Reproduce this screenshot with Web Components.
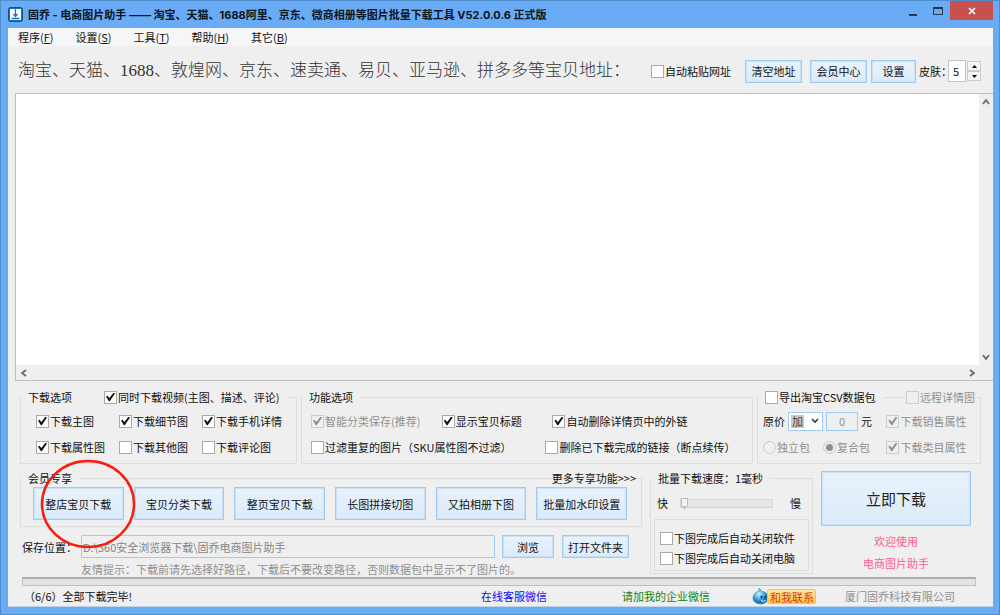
<!DOCTYPE html>
<html lang="zh-CN">
<head>
<meta charset="utf-8">
<meta name="viewport" content="width=device-width, initial-scale=1">
<title>固乔 - 电商图片助手</title>
<style>
  html, body { margin: 0; }
  body {
    font: 11px/16px "Noto Sans CJK SC", sans-serif;
    color: #111;
    --face: #efefef;
    --edge: #a0caf2;
    --line: #dedede;
    --muted: #8f8f8f;
  }
</style>
</head>
<body>
<app-window></app-window>

<script>
function define(name, html, setup) {
  const tpl = document.createElement('template');
  tpl.innerHTML = '<style>*{box-sizing:border-box}button,input,select,textarea{font:inherit;color:inherit;margin:0}</style>' + html;
  customElements.define(name, class extends HTMLElement {
    constructor() {
      super();
      this.attachShadow({ mode: 'open' }).append(tpl.content.cloneNode(true));
    }
    connectedCallback() { if (setup) setup(this, this.shadowRoot); }
  });
}

/* Check box or radio with its caption */
define('opt-check', `
<style>
  :host { display: inline-block; }
  label { display: flex; align-items: center; gap: 1px; white-space: nowrap; }
  input { appearance: none; flex: none; display: grid; place-items: center; width: 13px; height: 13px; background: #fff; border: 1px solid #a9a9a9; }
  input:checked::after { content: ""; width: 9px; height: 9px; background: #111; clip-path: polygon(0 45%, 16% 36%, 38% 62%, 82% 4%, 100% 12%, 42% 96%, 32% 96%); }
  input[type=radio] { border-radius: 50%; }
  input[type=radio]:checked::after { width: 7px; height: 7px; border-radius: 50%; clip-path: none; }
  input:disabled { background: var(--face); border-color: #ccc; }
  input:disabled:checked::after { background: var(--muted); }
  :host([disabled]) { color: var(--muted); }
</style>
<label><input type="checkbox"><span><slot></slot></span></label>`,
(host, root) => {
  const i = root.querySelector('input');
  if (host.hasAttribute('radio')) i.type = 'radio';
  i.checked = host.hasAttribute('checked');
  i.disabled = host.hasAttribute('disabled');
});

/* Light blue push button */
define('push-button', `
<style>
  :host { display: block; height: 23px; }
  button { display: block; width: 100%; height: 100%; padding: 0 4px; white-space: nowrap; border: 1px solid var(--edge); background: linear-gradient(#e9f2fc, #dbebfb); box-shadow: inset 0 0 0 1px #c9e1f9; }
</style>
<button type="button"><slot></slot></button>`);

/* Framed group with a caption on its top line */
define('group-box', `
<style>
  :host { display: block; position: relative; }
  fieldset { height: 100%; min-width: 0; margin: 0; padding: 0; border: 1px solid var(--line); }
  legend { padding: 0 7px; height: 16px; }
  legend ::slotted(*) { display: flex; }
  .corner { position: absolute; top: 0; right: 6px; background: var(--face); }
</style>
<fieldset><legend><slot name="title"></slot></legend><slot></slot></fieldset>
<div class="corner"><slot name="corner"></slot></div>`);

define('title-bar', `
<style>
  :host { display: flex; align-items: center; height: 27px; gap: 5px; color: #0b1520; }
  svg { display: block; }
  h1 { flex: 1; margin: 0; font: bold 11px/16px Inter, "Noto Sans CJK SC", sans-serif; white-space: nowrap; }
  .ctl { align-self: flex-start; display: flex; }
  button { display: grid; place-items: center; width: 25px; height: 19px; padding: 0; border: 0; background: none; }
  .close { width: 43px; background: #c8504f; }
</style>
<svg width="15" height="15" viewBox="0 0 15 15"><rect x=".5" y=".5" width="14" height="14" rx="2" fill="#1674b8" stroke="#0c5289"/><rect x="2" y="2" width="11" height="11" fill="#fff"/><path d="M7.500 2v7M5.500 7l2 2.500 2-2.500M3.500 11.500h8" stroke="#1674b8" stroke-width="1.300" fill="none"/></svg>
<h1>固乔 - 电商图片助手 —— 淘宝、天猫、1688阿里、京东、微商相册等图片批量下载工具 V52.0.0.6 正式版</h1>
<div class="ctl">
  <button type="button" aria-label="最小化"><svg width="10" height="10"><path d="M1 9h8" stroke="#26384d" stroke-width="2"/></svg></button>
  <button type="button" aria-label="最大化"><svg width="10" height="8"><path d="M.5 0v7.500h9V0" fill="none" stroke="#26384d"/><path d="M0 1h10" stroke="#26384d" stroke-width="2"/></svg></button>
  <button type="button" class="close" aria-label="关闭"><svg width="8" height="8"><path d="M1 1l6 6M7 1L1 7" stroke="#fff" stroke-width="1.700"/></svg></button>
</div>`);

define('menu-bar', `
<style>
  :host { display: block; background: #f5f6f8; }
  nav { display: flex; gap: 22px; height: 18px; padding: 0 10px; }
  button { padding: 0; border: 0; background: none; line-height: 18px; }
</style>
<nav>
  <button type="button">程序(<u>F</u>)</button><button type="button">设置(<u>S</u>)</button><button type="button">工具(<u>T</u>)</button><button type="button">帮助(<u>H</u>)</button><button type="button">其它(<u>B</u>)</button>
</nav>`);

define('address-bar', `
<style>
  :host { display: flex; align-items: center; height: 47px; padding: 3px 12px 0 10px; }
  h2 { flex: 1; margin: 0; font: 17px/24px "Liberation Serif", "Noto Sans CJK SC", serif; font-weight: 300; white-space: nowrap; color: #333; }
  opt-check { margin-right: 14px; }
  .wide { width: 57px; }
  .gap { margin-right: 8px; }
  .set { width: 45px; margin: 0 3px 0 4px; }
  input { width: 18px; height: 22px; padding: 0 4px; border: 1px solid #c4c4c4; background: #fff; margin-left: -4px; }
  label { display: flex; align-items: center; white-space: nowrap; }
  .spin { display: grid; margin-left: 1px; }
  .spin button { display: grid; place-items: center; width: 14px; height: 10px; padding: 0; border: 1px solid #ccc; background: #f4f4f4; }
  svg { display: block; }
</style>
<h2>淘宝、天猫、1688、敦煌网、京东、速卖通、易贝、亚马逊、拼多多等宝贝地址：</h2>
<opt-check>自动粘贴网址</opt-check>
<push-button class="wide gap">清空地址</push-button>
<push-button class="wide">会员中心</push-button>
<push-button class="set">设置</push-button>
<label>皮肤：<input type="text" value="5"></label>
<div class="spin">
  <button type="button" aria-label="增加"><svg width="5" height="3"><path d="M0 3L2.500 0 5 3z"/></svg></button>
  <button type="button" aria-label="减少"><svg width="5" height="3"><path d="M0 0L2.500 3 5 0z"/></svg></button>
</div>`);

define('address-list', `
<style>
  :host { display: grid; grid-template: minmax(80px, 1fr) 15px / 1fr 14px; border: 1px solid #bfbfbf; border-right: 0; }
  textarea { width: 100%; height: 100%; border: 0; padding: 2px; resize: none; overflow: hidden; background: #fff; outline: 0; }
  .bar { display: flex; justify-content: space-between; align-items: center; padding: 0 4px; }
  .v { flex-direction: column; padding: 5px 0; }
  .h { padding: 0 4px 0 5px; }
  button { display: grid; padding: 0; border: 0; background: none; }
  path { fill: none; stroke: #6b6b6b; stroke-width: 1.800; }
</style>
<textarea aria-label="宝贝地址"></textarea>
<div class="bar v">
  <button type="button" aria-label="向上"><svg width="8" height="6"><path d="M1 5l3-4 3 4"/></svg></button>
  <button type="button" aria-label="向下"><svg width="8" height="6"><path d="M1 1l3 4 3-4"/></svg></button>
</div>
<div class="bar h">
  <button type="button" aria-label="向左"><svg width="6" height="8"><path d="M5 1L1 4l4 3"/></svg></button>
  <button type="button" aria-label="向右"><svg width="6" height="8"><path d="M1 1l4 3-4 3"/></svg></button>
</div>`);

define('option-groups', `
<style>
  :host { display: grid; grid-template-columns: 277fr 452fr 224fr; gap: 4px; padding: 0 12px; }
  .head { gap: 32px; }
  .body { display: grid; row-gap: 10px; padding: 8px 0 8px 15px; }
  .three { grid-template-columns: 83fr 83fr 94fr; }
  .feat { padding-left: 9px; }
  .row { display: grid; }
  .f1 { grid-template-columns: 131fr 111fr 200fr; }
  .f2 { grid-template-columns: 235fr 207fr; }
  .csv { grid-template-columns: 124fr 94fr; padding: 8px 0 8px 5px; }
  .price, .pack { display: flex; align-items: center; height: 16px; }
  .price { gap: 3px; }
  .pack { gap: 13px; }
  .sel { display: grid; }
  .sel > * { grid-area: 1 / 1; }
  .sel svg { align-self: center; justify-self: end; margin-right: 4px; pointer-events: none; }
  select { appearance: none; width: 35px; height: 19px; padding: 0 0 0 3px; border: 1px solid var(--edge); border-radius: 0; color: #444; background: linear-gradient(#c8c8c8, #c8c8c8) 2px 2px / 13px 13px no-repeat #fff; }
  .amt { width: 32px; height: 19px; padding: 0; text-align: center; border: 1px solid var(--edge); background: var(--face); color: var(--muted); }
</style>
<group-box>
  <div slot="title" class="head"><span>下载选项</span><opt-check checked>同时下载视频(主图、描述、评论)</opt-check></div>
  <div class="body three">
    <opt-check checked>下载主图</opt-check><opt-check checked>下载细节图</opt-check><opt-check checked>下载手机详情</opt-check>
    <opt-check checked>下载属性图</opt-check><opt-check>下载其他图</opt-check><opt-check>下载评论图</opt-check>
  </div>
</group-box>
<group-box>
  <span slot="title">功能选项</span>
  <div class="body feat">
    <div class="row f1"><opt-check checked disabled>智能分类保存(推荐)</opt-check><opt-check checked>显示宝贝标题</opt-check><opt-check checked>自动删除详情页中的外链</opt-check></div>
    <div class="row f2"><opt-check>过滤重复的图片（SKU属性图不过滤）</opt-check><opt-check>删除已下载完成的链接（断点续传）</opt-check></div>
  </div>
</group-box>
<group-box>
  <opt-check slot="title">导出淘宝CSV数据包</opt-check>
  <opt-check slot="corner" disabled>远程详情图</opt-check>
  <div class="body csv">
    <div class="price"><label for="op">原价</label>
      <span class="sel"><select id="op"><option>加</option><option>减</option></select><svg width="8" height="6"><path d="M1 1l3 3 3-3" fill="none" stroke="#333" stroke-width="1.600"/></svg></span>
      <input class="amt" type="text" value="0" disabled aria-label="金额"><span>元</span></div>
    <opt-check checked disabled>下载销售属性</opt-check>
    <div class="pack"><opt-check radio disabled>独立包</opt-check><opt-check radio checked disabled>复合包</opt-check></div>
    <opt-check checked disabled>下载类目属性</opt-check>
  </div>
</group-box>`);

define('member-group', `
<style>
  :host { display: block; position: relative; }
  .btns { display: grid; grid-template-columns: repeat(6, 1fr); gap: 10px; padding: 1px 14px 6px 12px; }
  push-button { height: 33px; }
  .mark { position: absolute; z-index: 2; left: 19px; top: -12px; pointer-events: none; }
  a { color: inherit; text-decoration: none; }
</style>
<group-box>
  <span slot="title">会员专享</span>
  <a slot="corner" href="#more">更多专享功能&gt;&gt;&gt;</a>
  <div class="btns">
    <push-button>整店宝贝下载</push-button><push-button>宝贝分类下载</push-button><push-button>整页宝贝下载</push-button><push-button>长图拼接切图</push-button><push-button>又拍相册下图</push-button><push-button>批量加水印设置</push-button>
  </div>
</group-box>
<svg class="mark" width="98" height="92"><ellipse cx="49" cy="46" rx="46" ry="43" fill="none" stroke="#f81d0e" stroke-width="2.500"/></svg>`);

define('save-path', `
<style>
  :host { display: block; padding: 0 13px 0 2px; }
  .row { display: flex; align-items: center; }
  label { width: 59px; white-space: nowrap; }
  input { flex: 1; min-width: 0; height: 23px; padding: 0 1px; border: 1px solid var(--edge); background: var(--face); color: #858585; }
  .browse { width: 52px; margin: 0 8px 0 7px; }
  .open { width: 67px; }
  p { margin: 3px 0 0 59px; color: var(--muted); white-space: nowrap; }
</style>
<div class="row"><label for="path">保存位置：</label><input id="path" type="text" value="D:\\360安全浏览器下载\\固乔电商图片助手" readonly>
<push-button class="browse">浏览</push-button><push-button class="open">打开文件夹</push-button></div>
<p>友情提示：下载前请先选择好路径，下载后不要改变路径，否则数据包中显示不了图片的。</p>`);

define('speed-group', `
<style>
  :host { display: block; }
  .speed { display: flex; align-items: center; gap: 12px; padding: 9px 11px 8px 6px; }
  input { appearance: none; flex: 1; min-width: 0; height: 16px; background: none; }
  input::-webkit-slider-runnable-track { height: 9px; background: #e4e8e8; border: 1px solid #d3d6d6; }
  input::-webkit-slider-thumb { appearance: none; width: 7px; height: 12px; margin-top: -2px; background: linear-gradient(#f4f4f4, #f4f4f4) 1px 1px / 5px 7px no-repeat #bcbcbc; clip-path: polygon(0 0, 100% 0, 100% 65%, 50% 100%, 0 65%); }
  .slow { margin-left: 5px; }
  .after { display: grid; gap: 4px; margin: 0 3px 2px; padding: 10px 5px 4px; border: 1px solid var(--line); }
</style>
<group-box>
  <span slot="title">批量下载速度：1毫秒</span>
  <div class="speed"><span>快</span><input type="range" min="1" max="100" value="1" aria-label="批量下载速度"><span class="slow">慢</span></div>
  <div class="after"><opt-check>下图完成后自动关闭软件</opt-check><opt-check>下图完成后自动关闭电脑</opt-check></div>
</group-box>`);

define('start-panel', `
<style>
  :host { display: block; padding-top: 1px; text-align: center; color: #fb5f8e; }
  push-button { height: 55px; font-size: 15px; color: #222; margin-bottom: 7px; }
  p { margin: 0; }
  p + p { margin-top: 6px; }
</style>
<push-button>立即下载</push-button>
<p>欢迎使用</p><p>电商图片助手</p>`);

define('status-bar', `
<style>
  :host { display: grid; grid-template-columns: 461fr 141fr 130fr 93fr 140fr; align-items: center; height: 20px; padding: 0 8px 0 12px; white-space: nowrap; }
  .msg { padding-left: 4px; }
  a { text-decoration: none; justify-self: start; }
  .wx { color: #0909f5; }
  .qy { color: #118411; }
  .co { color: var(--muted); }
  .qq { display: flex; align-items: center; justify-self: start; padding: 0; border: 0; background: none; color: #d83a10; }
  .qq span { height: 15px; line-height: 14px; margin-left: -2px; padding: 0 1px 0 2px; background: linear-gradient(#ffe9a0, #ffc24c); border: 1px solid #f5c35a; border-radius: 2px; }
</style>
<span class="msg">（6/6）全部下载完毕!</span>
<a class="wx" href="#service">在线客服微信</a>
<a class="qy" href="#wecom">请加我的企业微信</a>
<button type="button" class="qq"><svg width="17" height="17" viewBox="0 0 17 17"><defs><radialGradient id="g" cx=".4" cy=".35"><stop offset="0" stop-color="#c9f0ff"/><stop offset=".6" stop-color="#57b4e4"/><stop offset="1" stop-color="#1f78b8"/></radialGradient></defs><path d="M6.500 .5c1.500.4 3 1.500 3.300 2.800C14 4 16 6.500 16 9.700 16 13.500 13 16 8.600 16S1 13.600 1 9.700C1 6.500 3.500 4 7 3.300 7.300 2.300 7 1.300 6.500.5z" fill="url(#g)" stroke="#3a88bb" stroke-width=".6"/><ellipse cx="9.500" cy="9" rx="1" ry="1.600" fill="#143b55"/><ellipse cx="13.500" cy="9" rx=".9" ry="1.500" fill="#143b55"/><path d="M9 12.500q2.500 1.600 4.500 0" fill="none" stroke="#e8faff"/></svg><span>和我联系</span></button>
<span class="co">厦门固乔科技有限公司</span>`);

define('app-window', `
<style>
  :host { display: flex; flex-direction: column; min-height: 100vh; box-sizing: border-box; padding: 0 6px 7px 7px; background: #6aabf5; border: 1px solid #4f8dcb; }
  main { flex: 1; display: flex; flex-direction: column; background: var(--face); border-bottom: 1px solid #bdd3ea; }
  title-bar, menu-bar, address-bar { flex: none; }
  address-list { flex: 1; margin: 0 0 8px 7px; }
  .lower { display: grid; grid-template-columns: minmax(0, 622fr) minmax(0, 163fr) minmax(0, 150fr); column-gap: 8px; padding: 6px 22px 0 12px; }
  save-path { margin-top: 8px; }
  .progress { height: 9px; margin: 0 17px 0 14px; background: #e3e3e3; border: 1px solid #c0c0c0; border-top: 2px solid #adadad; }
</style>
<title-bar></title-bar>
<main>
  <menu-bar></menu-bar>
  <address-bar></address-bar>
  <address-list></address-list>
  <option-groups></option-groups>
  <div class="lower">
    <div><member-group></member-group><save-path></save-path></div>
    <speed-group></speed-group>
    <start-panel></start-panel>
  </div>
  <div class="progress" role="progressbar" aria-label="下载进度" aria-valuenow="0"></div>
  <status-bar></status-bar>
</main>`);
</script>
</body>
</html>
